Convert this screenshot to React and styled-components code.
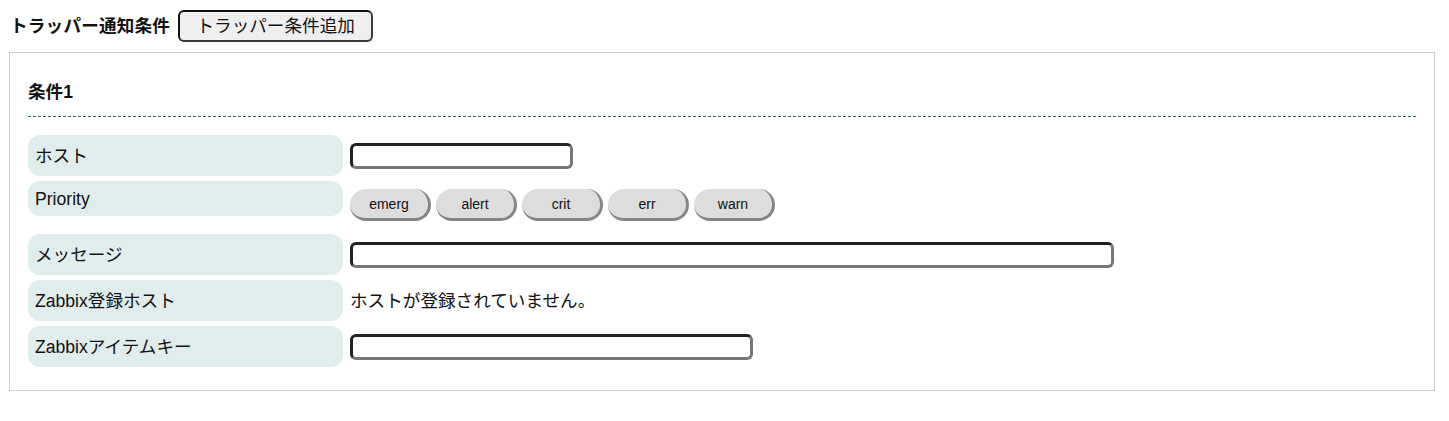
import styled, { createGlobalStyle } from "styled-components";

const GlobalStyle = createGlobalStyle`
  body {
    margin: 10px 14px 0 9px;
    font-family: "Liberation Sans", "Noto Sans CJK JP", sans-serif;
    font-size: 17.6px;
    color: #111;
    background: #fff;
  }
`;

const Header = styled.div`
  display: flex;
  align-items: center;
  gap: 8px;
  padding-left: 1px;
  height: 32px;
`;

const Title = styled.span`
  font-weight: bold;
  line-height: 24px;
  letter-spacing: 0.2px;
`;

const AddButton = styled.button`
  font-family: inherit;
  font-size: 17.6px;
  line-height: 23px;
  height: 32px;
  width: 195px;
  padding: 0 16px;
  background: #efefef;
  color: #111;
  border: 2px solid;
  border-color: #111 #3a3a3a #3a3a3a #111;
  border-radius: 6px;
`;

const Panel = styled.section`
  margin-top: 10px;
  border: 1px solid #cccccc;
  padding: 18px 18px 23px;
`;

const PanelTitle = styled.h3`
  margin: 0 0 18px;
  padding: 8px 0 10px;
  font-size: 17.6px;
  line-height: 27px;
  font-weight: bold;
  border-bottom: 1px dashed #1d6b6b;
`;

const Rows = styled.div`
  display: flex;
  flex-direction: column;
  gap: 5px;
`;

const Row = styled.div`
  display: flex;
  align-items: ${(p) => (p.$top ? "flex-start" : "center")};
  gap: 7px;
`;

const Label = styled.div`
  flex: 0 0 315px;
  box-sizing: border-box;
  height: ${(p) => p.$height || 41}px;
  display: flex;
  align-items: center;
  padding: 0 7px;
  background: #e0eded;
  border-radius: 12px;
  line-height: 24px;
`;

const Value = styled.div`
  display: flex;
  align-items: center;
`;

const TextInput = styled.input`
  box-sizing: border-box;
  width: ${(p) => p.$width}px;
  height: 26px;
  border: 3px solid;
  border-color: #222 #767676 #767676 #222;
  border-radius: 6px;
  background: #fff;
  padding: 0 6px;
  font-family: inherit;
  font-size: 15px;
`;

const PriorityList = styled.div`
  display: flex;
  gap: 5px;
  padding: 8px 0 8px;
`;

const PriorityButton = styled.button`
  box-sizing: border-box;
  width: 81px;
  height: 32px;
  padding: 0;
  background: #dddddd;
  border: none;
  border-right: 3px solid #858585;
  border-bottom: 3px solid #858585;
  border-radius: 16px;
  font-family: "Liberation Sans", Arial, sans-serif;
  font-size: 14px;
  color: #111;
`;

const Note = styled.span`
  line-height: 24px;
`;

const priorities = ["emerg", "alert", "crit", "err", "warn"];

export default function App() {
  return (
    <>
      <GlobalStyle />
      <Header>
        <Title>トラッパー通知条件</Title>
        <AddButton type="button">トラッパー条件追加</AddButton>
      </Header>

      <Panel>
        <PanelTitle>条件1</PanelTitle>
        <Rows>
          <Row>
            <Label>ホスト</Label>
            <Value>
              <TextInput $width={223} />
            </Value>
          </Row>

          <Row $top>
            <Label $height={35}>Priority</Label>
            <PriorityList>
              {priorities.map((p) => (
                <PriorityButton key={p} type="button">
                  {p}
                </PriorityButton>
              ))}
            </PriorityList>
          </Row>

          <Row>
            <Label>メッセージ</Label>
            <Value>
              <TextInput $width={764} />
            </Value>
          </Row>

          <Row>
            <Label>Zabbix登録ホスト</Label>
            <Value>
              <Note>ホストが登録されていません。</Note>
            </Value>
          </Row>

          <Row>
            <Label>Zabbixアイテムキー</Label>
            <Value>
              <TextInput $width={403} />
            </Value>
          </Row>
        </Rows>
      </Panel>
    </>
  );
}
